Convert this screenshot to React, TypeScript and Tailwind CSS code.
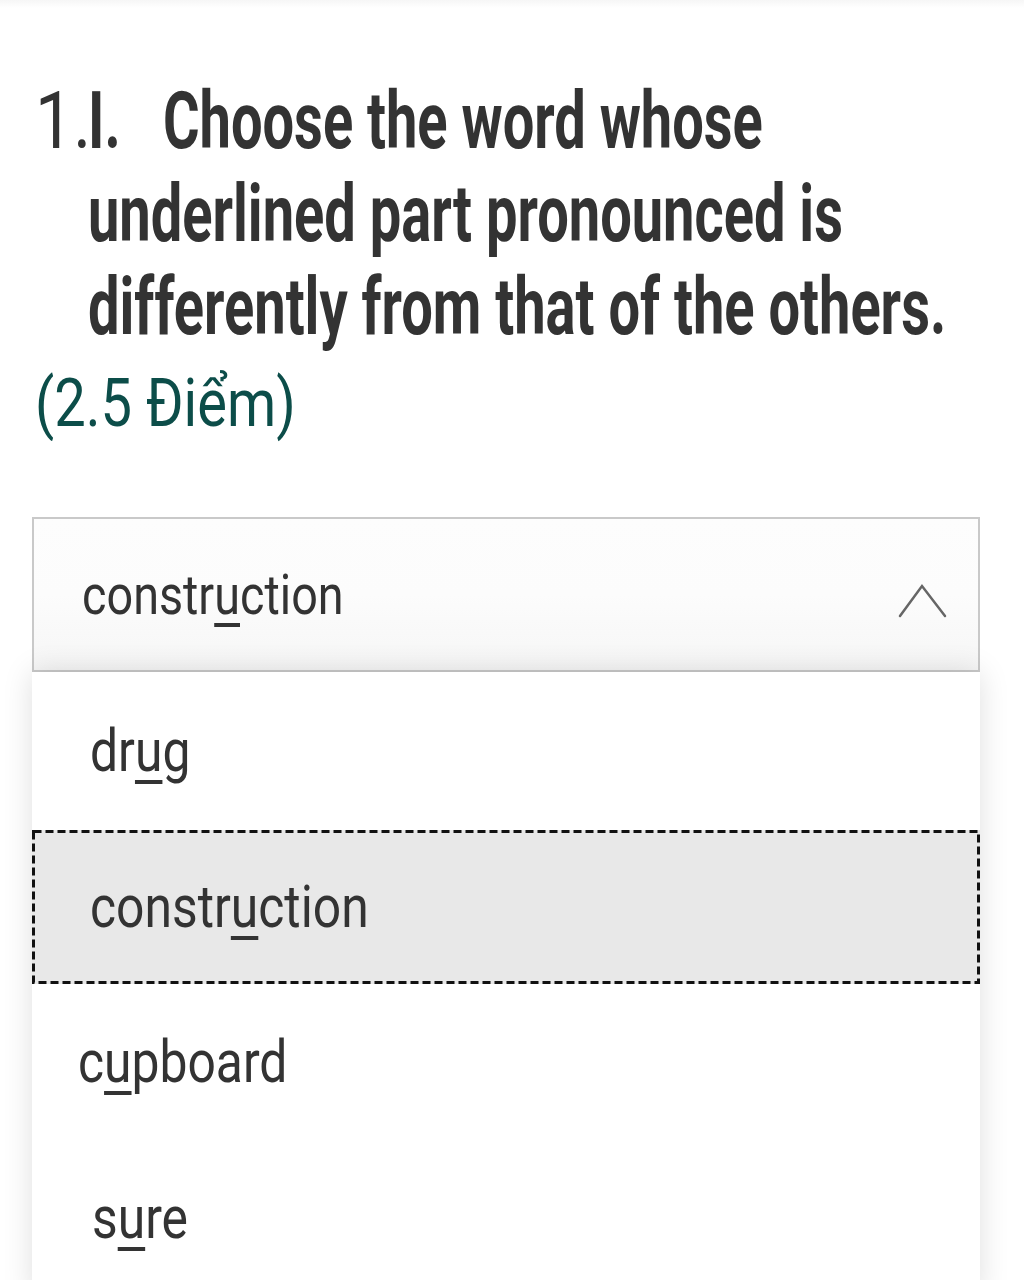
import React from "react";

const font = { fontFamily: "Roboto, 'Noto Sans', sans-serif" };

function Cond({ children, className = "" }: { children: React.ReactNode; className?: string }) {
  return (
    <span className={"inline-block origin-left scale-x-[0.85] whitespace-nowrap " + className}>{children}</span>
  );
}

function CondB({ children }: { children: React.ReactNode }) {
  return <span className="inline-block origin-left scale-x-[0.7] whitespace-nowrap">{children}</span>;
}

function CondO({ children }: { children: React.ReactNode }) {
  return <span className="inline-block origin-left scale-x-[0.83] whitespace-nowrap">{children}</span>;
}

function U({ children }: { children: React.ReactNode }) {
  return <span className="underline decoration-[4px] underline-offset-[9px] decoration-[#333]">{children}</span>;
}

function Chevron() {
  return (
    <svg width="50" height="36" viewBox="0 0 50 36" fill="none">
      <polyline points="2,33 24,3 47,33" stroke="#666" strokeWidth="2.5" strokeLinecap="round" strokeLinejoin="miter" />
    </svg>
  );
}

export default function App() {
  return (
    <div className="min-h-[1280px] bg-white overflow-hidden text-[#333]" style={font}>
      <div className="h-[8px] bg-gradient-to-b from-[#f6f6f6] to-white" />
      <div className="mt-[67px]">
        <div className="flex pl-[35px] text-[80px] leading-[93px]">
          <div className="w-[53px] shrink-0">
            <Cond>1.</Cond>
          </div>
          <div className="font-bold">
            <CondB>
              <span className="inline-block w-[107px]">I.</span>
              Choose the word whose
            </CondB>
          </div>
        </div>
        <div className="pl-[88px] text-[80px] leading-[93px] font-bold">
          <CondB>underlined part pronounced is</CondB>
        </div>
        <div className="pl-[88px] text-[80px] leading-[93px] font-bold">
          <CondB>differently from that of the others.</CondB>
        </div>
        <div className="pl-[35px] text-[66px] leading-[100px] text-[#0c4d49]">
          <Cond>(2.5 Điểm)</Cond>
        </div>
      </div>

      <div className="ml-[32px] w-[948px] mt-[63px]">
        <div className="h-[155px] border-2 border-[#c9c9c9] bg-gradient-to-b from-[#fdfdfd] via-[#fcfcfc] to-[#f6f6f6] flex items-center justify-between pl-[48px] pr-[30px]">
          <div className="text-[55px] leading-[64px]">
            <Cond>
              constr<U>u</U>ction
            </Cond>
          </div>
          <div className="mb-[-12px]">
            <Chevron />
          </div>
        </div>
        <div className="bg-white shadow-[0_0_28px_rgba(0,0,0,0.13)] text-[60px] leading-[70px]">
          <div className="h-[158px] flex items-center pl-[58px]">
            <CondO>
              dr<U>u</U>g
            </CondO>
          </div>
          <div className="relative h-[154px] flex items-center pl-[58px] bg-[#e8e8e8]">
            <CondO>
              constr<U>u</U>ction
            </CondO>
            <svg className="absolute inset-0" width="948" height="154" viewBox="0 0 948 154" fill="none">
              <rect x="1.5" y="1.5" width="945" height="151" stroke="#111" strokeWidth="3" strokeDasharray="8 4" />
            </svg>
          </div>
          <div className="h-[156px] flex items-center pl-[46px]">
            <CondO>
              c<U>u</U>pboard
            </CondO>
          </div>
          <div className="h-[156px] flex items-center pl-[60px]">
            <CondO>
              s<U>u</U>re
            </CondO>
          </div>
        </div>
      </div>
    </div>
  );
}
